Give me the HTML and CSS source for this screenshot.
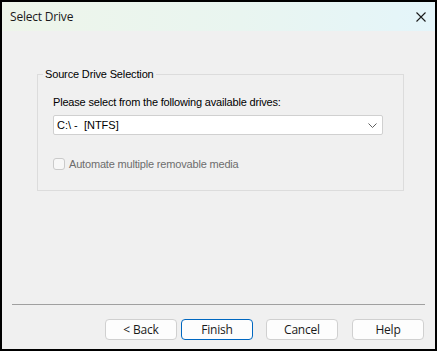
FILE: index.html
```html
<!DOCTYPE html>
<html>
<head>
<meta charset="utf-8">
<link rel="stylesheet" href="styles.css">
</head>
<body>
<div class="window">
  <div class="titlebar">
    <span class="title">Select Drive</span>
    <svg class="close" width="10" height="10" viewBox="0 0 10 10"><path d="M0.5 0.5 L9.5 9.5 M9.5 0.5 L0.5 9.5" stroke="#1a1a1a" stroke-width="1.1" fill="none"/></svg>
  </div>
  <div class="content">
    <fieldset class="group">
      <legend class="legend">Source Drive Selection</legend>
      <div class="prompt">Please select from the following available drives:</div>
      <div class="combo">
        <span class="combo-text">C:\ -  [NTFS]</span>
        <svg class="chev" width="9" height="5" viewBox="0 0 9 5"><polyline points="0.5,0.5 4.5,4.5 8.5,0.5" stroke="#5f5f5f" stroke-width="1" fill="none"/></svg>
      </div>
      <label class="check">
        <span class="box"></span>
        <span class="check-label">Automate multiple removable media</span>
      </label>
    </fieldset>
  </div>
  <div class="footer">
    <div class="sep"></div>
    <div class="buttons">
      <button class="btn">&lt; Back</button>
      <button class="btn default">Finish</button>
      <button class="btn cancel">Cancel</button>
      <button class="btn help">Help</button>
    </div>
  </div>
</div>
</body>
</html>
```

FILE: styles.css
```css
html, body {
  margin: 0;
  padding: 0;
  background: #000;
}
.window {
  box-sizing: border-box;
  width: 437px;
  height: 351px;
  border: 2px solid #000;
  background: #f0f0f0;
  display: flex;
  flex-direction: column;
}
.titlebar {
  height: 29px;
  flex: none;
  display: flex;
  align-items: center;
  justify-content: space-between;
  padding: 0 9px 0 8px;
  background: linear-gradient(90deg, #eef5ea 0%, #e9f5f0 55%, #e4f5fa 100%);
}
.title {
  font-family: "Open Sans", "Noto Sans", sans-serif;
  font-size: 12px;
  color: #1a1a1a;
  line-height: 16px;
  letter-spacing: -0.2px;
}
.close {
  display: block;
}
.content {
  flex: 1;
  padding-top: 37px;
}
.group {
  margin: 0 31px 0 35px;
  padding: 15px 20px 20px 15px;
  border: 1px solid #dcdcdc;
  border-radius: 0;
  min-width: 0;
}
.legend {
  font-family: "Liberation Sans", Arial, sans-serif;
  font-size: 11px;
  line-height: 13px;
  color: #000;
  padding: 0 2px;
  margin-left: -10px;
  letter-spacing: -0.15px;
}
.prompt {
  font-family: "Liberation Sans", Arial, sans-serif;
  font-size: 11px;
  line-height: 13px;
  color: #000;
  letter-spacing: -0.18px;
}
.combo {
  box-sizing: border-box;
  margin-top: 6px;
  height: 20px;
  background: #fff;
  border: 1px solid #d0d0d0;
  border-radius: 2px;
  display: flex;
  align-items: center;
  justify-content: space-between;
  padding: 0 5px 0 3px;
}
.combo-text {
  font-family: "Liberation Sans", Arial, sans-serif;
  font-size: 11px;
  white-space: pre;
  color: #000;
}
.chev {
  display: block;
}
.check {
  margin-top: 23px;
  display: flex;
  align-items: center;
  gap: 4px;
  height: 12px;
}
.box {
  box-sizing: border-box;
  width: 12px;
  height: 12px;
  border: 1px solid #cacaca;
  border-radius: 3px;
  background: #f7f7f7;
}
.check-label {
  font-family: "Liberation Sans", Arial, sans-serif;
  font-size: 11px;
  color: #6d6d6d;
  letter-spacing: -0.18px;
}
.footer {
  flex: none;
  padding: 0 10px 9px 10px;
}
.sep {
  height: 1px;
  background: #a0a0a0;
}
.buttons {
  display: flex;
  justify-content: flex-end;
  padding-top: 14px;
  padding-right: 1px;
}
.btn {
  box-sizing: border-box;
  width: 72px;
  height: 21px;
  background: #fdfdfd;
  border: 1px solid #d0d0d0;
  border-radius: 4px;
  font-family: "Open Sans", "Noto Sans", sans-serif;
  font-size: 12px;
  color: #1a1a1a;
  padding: 0;
  line-height: 17px;
  letter-spacing: -0.2px;
}
.btn.default {
  border-color: #0067c0;
  margin-left: 4px;
}
.btn.cancel {
  margin-left: 13px;
}
.btn.help {
  margin-left: 14px;
}
```
